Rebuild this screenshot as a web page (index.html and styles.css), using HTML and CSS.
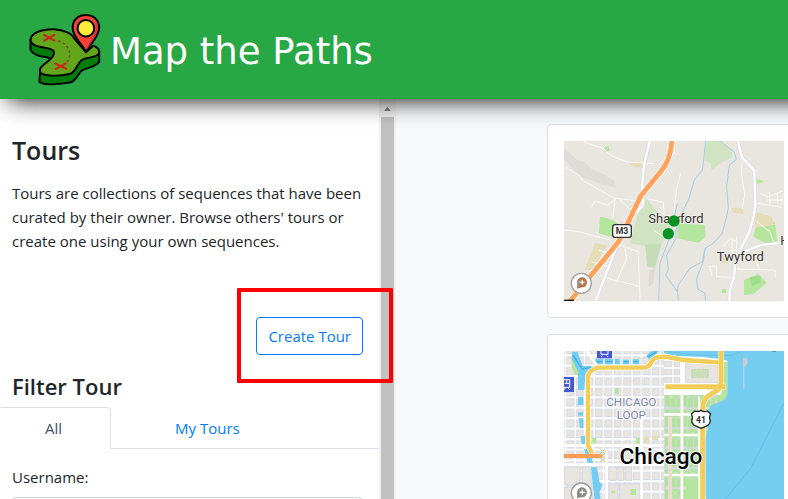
FILE: index.html
```html
<!DOCTYPE html>
<html lang="en">
<head>
<meta charset="utf-8">
<meta name="viewport" content="width=device-width, initial-scale=1">
<title>Tours - Map the Paths</title>
<link rel="stylesheet" href="styles.css">
</head>
<body>
<header class="topbar">
  <a class="brand" href="#">
    <svg class="brand-icon" viewBox="84 38 222 220" aria-hidden="true">
      <g stroke="#000" stroke-width="6" stroke-linejoin="round" stroke-linecap="round">
        <path fill="#007d08" d="M91 118V149C98 164 124 170 143 172L156 176L120 212L118 246C130 255 170 254 213 247C231 239 234 221 245 212C258 203 282 203 298 186V155Z"/>
        <path fill="#62a61c" d="M91 119C92 99 124 86 162 87C190 89 216 99 223 115L258 156L280 137C294 140 301 151 297 160C286 176 260 169 244 181C230 193 229 214 211 221C184 228 139 231 121 218C113 203 133 193 150 178C164 166 167 152 152 147C132 139 94 143 91 119Z"/>
        <path fill="#f44336" d="M258 156C250 134 218 111 218 83C218 57 236 44 258 44C281 44 298 59 298 83C298 111 267 134 258 156Z"/>
        <circle cx="258" cy="84" r="25" fill="#ffeb3b"/>
      </g>
      <path d="M292 68C297 99 271 125 260 147" fill="none" stroke="#c9302c" stroke-width="4"/>
      <path d="M174 122C192 126 207 141 209 158C211 174 205 183 195 189" fill="none" stroke="#795020" stroke-width="5" stroke-dasharray="8 7"/>
      <path d="M132 104L163 121M163 104L132 121M165 190L199 206M197 190L167 207" fill="none" stroke="#d32018" stroke-width="6" stroke-linecap="round"/>
    </svg>
    <span class="brand-name">Map the Paths</span>
  </a>
</header>
<div class="layout">
  <aside class="sidebar">
    <div class="panel">
      <h1 class="title">Tours</h1>
      <p class="intro">Tours are collections of sequences that have been curated by their owner. Browse others' tours or create one using your own sequences.</p>
      <div class="actions">
        <button class="btn" type="button">Create Tour</button>
        <span class="highlight"></span>
      </div>
      <h2 class="subtitle">Filter Tour</h2>
      <nav class="tabs">
        <a class="tab tab-active" href="#">All</a>
        <a class="tab" href="#">My Tours</a>
      </nav>
      <form class="filter">
        <label for="username">Username:</label>
        <input id="username" class="field" type="text">
      </form>
    </div>
    <div class="scrollbar" aria-hidden="true">
      <svg class="scroll-up" viewBox="0 0 17 17"><path d="M5 11L8.500 7L12 11Z" fill="#858585"/></svg>
      <div class="thumb"></div>
    </div>
  </aside>
  <main class="results">
    <article class="card">
      <svg class="map" viewBox="72 63 660 480" role="img" aria-label="Map of Shawford">
        <rect x="72" y="63" width="660" height="480" fill="#e9e6e0"/>
        <path fill="#dfdbd6" d="M72 83L112 121L135 127L155 148L195 165L224 184L229 203L176 190L120 168L72 118Z"/>
        <g fill="#d0e4c1">
          <path d="M497 63H540L576 92V112L545 127L515 150L512 128L494 122Z"/>
          <path d="M315 230L352 275L400 300L374 350L362 380L345 443L322 440L316 378L270 370L285 310L298 270Z"/>
        </g>
        <path fill="#c5ddb6" d="M316 375L364 372L345 443L322 440Z"/>
        <g fill="#b4e69d">
          <path d="M412 310L495 315L497 350L475 368L412 355Z"/>
          <path d="M180 290L222 302L240 317L214 350L177 340Z"/>
          <path d="M640 350L650 315L705 305L712 365L680 372Z"/>
          <path d="M612 480L655 462L680 488L640 522L612 525Z"/>
          <path d="M193 81L206 77L209 93L196 97ZM649 176L675 184L650 192ZM670 286H684V298H670ZM546 508H558V519H546ZM180 290L210 296L200 303Z"/>
        </g>
        <path fill="#9edc8b" d="M628 472L661 468L662 488L636 498Z"/>
        <g fill="#e5ddb7">
          <path d="M165 370L200 375L160 450L133 450Z"/>
          <path d="M645 275L695 290L704 315L645 323Z"/>
          <path d="M263 125H306V143L280 141ZM574 263H610V282L580 278ZM542 405L566 410V430H545Z"/>
        </g>
        <path fill="#dedad3" d="M328 450L345 447L341 490L325 500Z"/>
        <g fill="none" stroke="#faf9f6" stroke-width="3">
          <path d="M78 142L115 165L130 183L225 235L290 242M130 66L190 85L210 105L260 126L343 131M155 260L164 243L203 256L226 236L218 294M237 237L270 267M321 236L370 247L372 285L355 270M422 160L410 205L402 275M607 115L604 160L614 225L607 267M72 330L115 335L210 360M177 390L220 405L205 440L155 425M238 375L295 395L300 540M255 385L260 415L230 485L182 465M225 480L298 500M655 250L725 262M660 220L685 230L730 212M688 215L690 255M711 218L713 248M680 240H730M506 440L530 438V470L575 472M550 380L570 355L590 365M564 395L600 385L605 425M510 443L516 468M590 447L705 450L706 470M616 410L645 425M645 420L660 450M576 360V415M590 350V410M650 305L690 335L700 365M340 330L370 350M398 65L405 105"/>
        </g>
        <g fill="none" stroke="#a2ceee" stroke-width="3">
          <path d="M497 63L492 110L487 150L463 180L447 235L428 275L408 330V355L380 405L385 450L377 465L412 515L416 542"/>
          <path d="M412 250L388 355L360 430L356 542"/>
          <path d="M540 63L583 96L589 118L568 135L560 200L565 262L560 290L547 340L520 370L495 385L490 425L470 475L472 507L495 520L497 542"/>
          <path d="M495 385L487 425L450 445L415 495L412 515"/>
        </g>
        <g fill="none" stroke-linejoin="round">
          <path stroke="#d9d9e3" stroke-width="11" d="M330 63C312 125 308 150 306 220M312 236L307 258L290 277M230 380L167 542M593 63L606 112L643 152L646 250L641 290L628 335L605 382L585 430L583 465L570 510L568 542M609 396L660 376L728 367"/>
          <path stroke="#fff" stroke-width="7" d="M330 63C312 125 308 150 306 220M312 236L307 258L290 277M230 380L167 542M593 63L606 112L643 152L646 250L641 290L628 335L605 382L585 430L583 465L570 510L568 542M609 396L660 376L728 367"/>
          <path stroke="#fff" stroke-width="20" d="M396 63C392 108 382 130 366 150L302 228L270 295L235 366L150 470L88 546"/>
          <path stroke="#ffa35c" stroke-width="15" d="M396 63C392 108 382 130 366 150L302 228L270 295L235 366L150 470L88 546"/>
        </g>
        <rect x="218" y="314" width="56" height="38" rx="8" fill="#fff" stroke="#333" stroke-width="4"/>
        <text class="map-shield" x="246" y="343">M3</text>
        <text class="map-town" x="408" y="308">Shawford</text>
        <text class="map-town" x="601" y="422">Twyford</text>
        <text class="map-town" x="735" y="375">H</text>
        <circle cx="402" cy="303" r="17" fill="#079422"/>
        <circle cx="385" cy="341" r="17" fill="#079422"/>
        <circle cx="124" cy="490" r="30" fill="#fff" stroke="#a2a2a0" stroke-width="4"/>
        <path fill="#b87342" d="M111 506V488A15 15 0 1 1 127 502Z"/>
        <path fill="#999" d="M111 506V488L124 475L115 502Z"/>
        <path stroke="#fff" stroke-width="4" d="M119 487H135M127 479V495"/>
        <path fill="#111" d="M72 539H102V543H72Z"/>
      </svg>
    </article>
    <article class="card">
      <svg class="map" viewBox="72 48 660 480" role="img" aria-label="Map of Chicago">
        <defs>
          <pattern id="blocks" x="164" y="94" width="28.500" height="31.500" patternUnits="userSpaceOnUse">
            <rect width="28.500" height="31.500" fill="#fff"/>
            <rect x="2" y="3" width="21" height="22" fill="#e8e5df" stroke="#d5d8e5" stroke-width="3"/>
          </pattern>
          <pattern id="gardens" x="372" y="100" width="52" height="60" patternUnits="userSpaceOnUse">
            <rect width="52" height="60" fill="#d3dade"/>
            <path fill="#b2e29b" d="M3 3H17V55H3ZM20 3H49V28H20ZM20 30H35V56H20ZM38 30H49V56H38Z"/>
            <path stroke="#d9e6d6" stroke-width="2" d="M20 3L49 28M48 3L20 28"/>
          </pattern>
        </defs>
        <rect x="72" y="48" width="660" height="480" fill="url(#blocks)"/>
        <path fill="#e8e5df" stroke="#d5d8e5" stroke-width="3" d="M74 396H120V450H74ZM74 457H120V528H74ZM127 397H150L162 528H127ZM207 396H229V436H207ZM234 396H251V436H234ZM257 396H275V436H257ZM207 446H234V528H207ZM239 446H300V528H239Z"/>
        <path fill="#b4e69d" d="M94 70L120 106L135 117L105 121L96 98ZM225 160H236V178H225ZM288 308H300V326H288ZM155 308H169V325H155ZM272 462H288V480H272ZM214 467H226V475H214Z"/>
        <path fill="#e5ddb7" d="M310 305H328V325H310ZM337 302H354V316H337Z"/>
        <path fill="url(#gardens)" d="M372 180H565V210L504 235V528H372Z"/>
        <path fill="#fff" d="M372 55H562V180H372Z"/>
        <path fill="#e8e5df" stroke="#d5d8e5" stroke-width="3" d="M374 80H395V95H374ZM402 80H419V95H402ZM374 103H395V119H374ZM402 103H419V119H402ZM374 127H395V142H374ZM402 127H419V142H402ZM436 84H533V143H436Z"/>
        <path fill="#cbdfb7" stroke="#b4c4c5" stroke-width="2" stroke-dasharray="5 3" d="M455 103H505V128H455Z"/>
        <g fill="none" stroke="#fff" stroke-width="8">
          <path d="M372 238H500M372 300H496M372 420H496M426 48V528M372 175H545M200 350V528M72 389H372M305 240V528M72 332H370"/>
          <path d="M477 185V528" stroke-width="5"/>
        </g>
        <path fill="#b6e69e" d="M438 430H475V528H438ZM548 80H562V180L560 194L520 196L545 175Z"/>
        <path fill="#e9ded1" d="M384 245H396V528H384Z"/>
        <path fill="#72cdf2" d="M96 50H112L128 92L165 94L154 112H137L133 165H114V108L95 72ZM115 185H130V210H113ZM114 232H129V242H114ZM116 250H130V280H120ZM122 303H136V327H125ZM132 343L146 341L160 383H143ZM153 397H171L178 440L187 449L179 470L184 528H167ZM165 72H189V88H165ZM194 72H219V88H194ZM225 72H239V88H225ZM248 74H267V88H248ZM278 73H297V88H278ZM319 62L333 48H356L330 78Z"/>
        <path stroke="#3cafe0" stroke-width="4" d="M100 62L127 102L155 97M170 80H187M197 80H216M252 80H265M281 80H294M323 66L350 50" fill="none"/>
        <path fill="#75cef0" d="M372 48H732V528H508L496 480V310L504 280V230L512 212C540 200 562 197 562 173V77L533 71L490 66L410 63L372 55Z"/>
        <g fill="none" stroke="#60b6e1" stroke-width="2"><path d="M732 205L630 403L557 492L520 528M372 48L465 60L572 62L605 48"/></g>
        <path fill="#c9cbd9" d="M609 70H622L623 85L616 94H608Z"/>
        <path fill="none" stroke="#bccbed" stroke-width="4" d="M611 94V162"/>
        <path d="M697 48H708" stroke="#667e88" stroke-width="5"/>
        <path d="M141 48L162 80L172 96" fill="none" stroke="#fff" stroke-width="10"/>
        <g fill="none" stroke="#fff" stroke-width="17" stroke-linejoin="round">
          <path d="M157 355L144 330V125Q145 110 170 98H310Q328 97 333 82Q342 66 360 66H382L430 75L535 82"/>
          <path d="M543 48V145Q540 163 525 170L505 183Q487 195 488 225V528M376 155H556"/>
        </g>
        <g fill="none" stroke="#f2ce58" stroke-width="13" stroke-linejoin="round">
          <path d="M156 355L144 330V125Q145 110 170 98H310Q328 97 333 82Q342 66 360 66H382L430 75L535 82"/>
          <path d="M543 48V145Q540 163 525 170L505 183Q487 195 488 225V528M376 155H556" stroke-width="15"/>
        </g>
        <path stroke="#ff9c54" stroke-width="12" d="M72 363H187"/>
        <path stroke="#c6ce84" stroke-width="3" fill="none" d="M181 343L194 356L181 369L194 380M194 343L181 356L194 369L181 380"/>
        <path fill="#4458d4" d="M171 48H216V70H171ZM72 126H102V171H72Z"/>
        <path fill="none" stroke="#fff" stroke-width="3" d="M183 48V58H204V48M187 62L184 66M201 62L204 66M72 134H89V157H72M74 145H88M80 135V145M76 158L73 165M84 158L89 165"/>
        <text class="map-area" x="274" y="213">CHICAGO</text>
        <text class="map-area" x="274" y="252">LOOP</text>
        <text class="map-city" x="363" y="387">Chicago</text>
        <path fill="#fff" stroke="#222" stroke-width="4" stroke-linejoin="round" d="M465 228Q474 232 483 226Q492 233 502 228L512 237Q506 248 511 256C511 272 498 273 483 280C469 273 455 272 455 256Q460 248 454 237Z"/>
        <text class="map-shield" x="483" y="264">41</text>
        <circle cx="124" cy="474" r="30" fill="#fff" stroke="#999" stroke-width="4"/>
        <path fill="#8b8b89" d="M111 489V471A15 15 0 1 1 127 487Z"/>
        <path stroke="#fff" stroke-width="4" d="M119 472H135M127 464V480"/>
      </svg>
    </article>
  </main>
</div>
</body>
</html>
```

FILE: styles.css
```css
* {
  box-sizing: border-box;
}

body {
  margin: 0;
  height: 100vh;
  display: flex;
  flex-direction: column;
  overflow: hidden;
  background: #f8f9fa;
  color: #212529;
  font: 15px/24px "Open Sans", "Noto Sans", sans-serif;
}

a {
  color: #007bff;
  text-decoration: none;
}

.topbar {
  position: relative;
  z-index: 2;
  flex: none;
  padding: 13px 28px;
  background: #28a745;
  box-shadow: 18px -10px 24px 10px #000;
}

.brand {
  display: flex;
  align-items: center;
  gap: 6px;
  color: #fff;
}

.brand-icon {
  width: 74px;
  height: 73px;
}

.brand-name {
  padding: 4px 2px 0;
  font: 37px/42px "DejaVu Sans", sans-serif;
}

.layout {
  flex: 1;
  min-height: 0;
  display: flex;
  overflow: hidden;
}

.sidebar {
  flex: none;
  display: flex;
  width: 396px;
  overflow: hidden;
  background: #fff;
}

.panel {
  flex: 1;
  min-width: 0;
  padding-top: 34px;
}

.title,
.subtitle {
  margin: 0 12px;
  font-weight: 600;
}

.title {
  font-size: 25px;
  line-height: 34px;
}

.subtitle {
  margin-top: 16px;
  font-size: 22px;
  line-height: 30px;
}

.intro {
  margin: 14px 12px 0;
}

.actions {
  position: relative;
  display: flex;
  justify-content: flex-end;
  margin-top: 64px;
  padding-right: 16px;
}

.btn {
  padding: 6px 11px;
  border: 1px solid #007bff;
  border-radius: 4px;
  background: transparent;
  color: #007bff;
  font: inherit;
}

.highlight {
  position: absolute;
  top: -29px;
  right: -14px;
  width: 156px;
  height: 95px;
  border: 4px solid #f00;
  border-radius: 1px;
  pointer-events: none;
  z-index: 1;
}

.tabs {
  display: flex;
  margin-top: 6px;
  border-bottom: 1px solid #dee2e6;
}

.tab {
  margin-bottom: -1px;
  padding: 8px 63px;
  border: 1px solid transparent;
}

.tab-active {
  padding: 8px 48px 8px 44px;
  border-color: #dee2e6 #dee2e6 #fff transparent;
  border-top-right-radius: 4px;
  background: #fff;
  color: #495057;
}

.filter {
  padding: 16px 16px 0 12px;
}

.filter label {
  display: block;
  margin-bottom: 8px;
}

.field {
  width: 100%;
  height: 38px;
  border: 1px solid #ced4da;
  border-radius: 4px;
  font: inherit;
}

.scrollbar {
  flex: none;
  display: flex;
  flex-direction: column;
  width: 17px;
  padding: 1px 2px 0;
  background: #f1f1f1;
}

.scroll-up {
  flex: none;
  align-self: center;
  width: 17px;
  height: 17px;
}

.thumb {
  flex: 1;
  background: #c1c1c1;
}

.results {
  flex: 1;
  min-width: 0;
  overflow: hidden;
  display: flex;
  flex-direction: column;
  gap: 16px;
  padding: 25px 0 0 151px;
}

.card {
  flex: none;
  width: 480px;
  padding: 16px;
  border: 1px solid #dfdfdf;
  border-radius: 4px;
  background: #fff;
}

.map {
  display: block;
  width: 220px;
  height: 160px;
}

.map text {
  font-family: Roboto, sans-serif;
  text-anchor: middle;
}

.map-town {
  fill: #333;
  stroke: #f4f2ee;
  stroke-width: 5px;
  paint-order: stroke;
  font-size: 39px;
}

.map-shield {
  fill: #333;
  font-size: 26px;
  font-weight: 700;
}

.map-area {
  fill: #7b80a8;
  stroke: #fff;
  stroke-width: 6px;
  paint-order: stroke;
  font-size: 35px;
}

.map-city {
  fill: #000;
  stroke: #fff;
  stroke-width: 6px;
  paint-order: stroke;
  font-size: 68px;
  font-weight: 500;
}
```
